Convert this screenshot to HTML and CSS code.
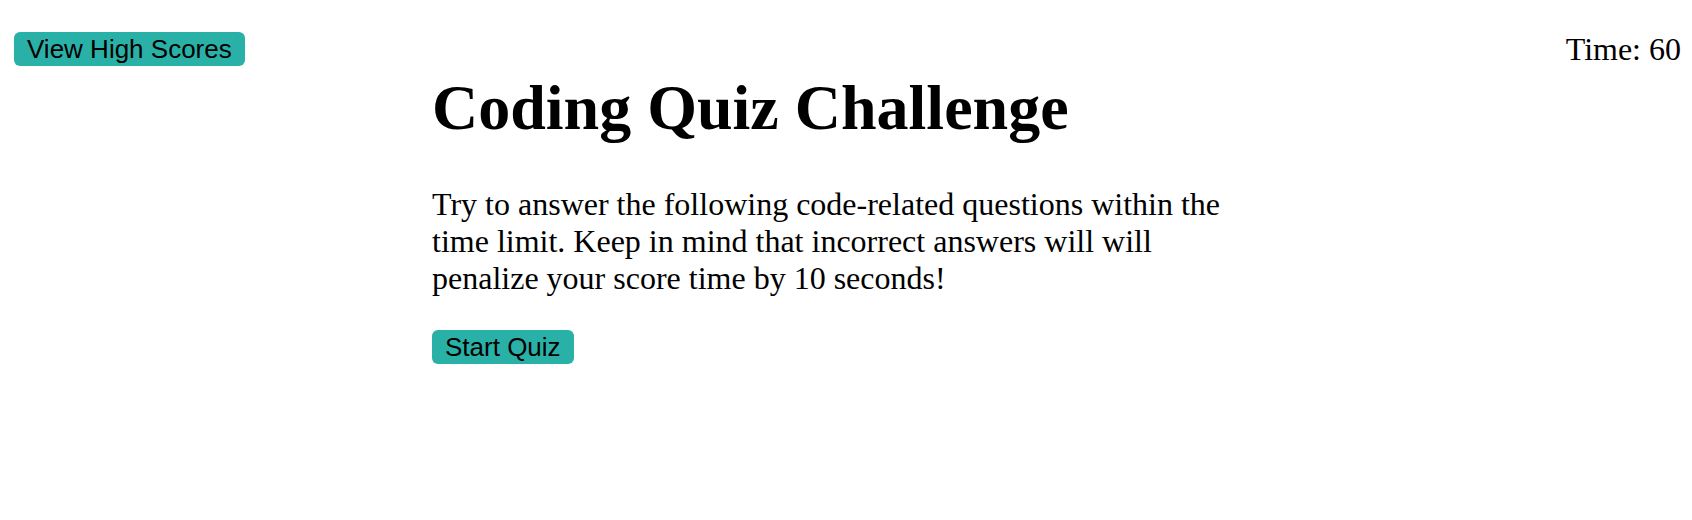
FILE: index.html
```html
<!DOCTYPE html>
<html lang="en">
<head>
<meta charset="utf-8">
<title>Coding Quiz Challenge</title>
<link rel="stylesheet" href="styles.css">
</head>
<body>
  <header class="topbar">
    <button class="btn">View High Scores</button>
    <div class="timer">Time: 60</div>
  </header>
  <main class="intro">
    <h1 class="title">Coding Quiz Challenge</h1>
    <p class="lead">Try to answer the following code-related questions within the time limit. Keep in mind that incorrect answers will will penalize your score time by 10 seconds!</p>
    <button class="btn">Start Quiz</button>
  </main>
</body>
</html>
```

FILE: styles.css
```css
html, body {
  margin: 0;
  padding: 0;
  background: #ffffff;
  color: #000000;
  font-family: "Liberation Serif", "Times New Roman", serif;
}

.topbar {
  display: flex;
  justify-content: space-between;
  align-items: center;
  padding: 32px 11px 0 14px;
}

.btn {
  font-family: "Liberation Sans", Arial, sans-serif;
  font-size: 26px;
  line-height: 34px;
  height: 34px;
  padding: 0 13px;
  margin: 0;
  border: none;
  border-radius: 6px;
  background: #2ab1a7;
  color: #000000;
  cursor: pointer;
}

.timer {
  font-size: 32px;
  line-height: 34px;
}

.intro {
  width: 828px;
  margin: 0 auto;
}

.title {
  font-size: 64px;
  font-weight: bold;
  margin: 5px 0 0;
}

.lead {
  font-size: 32px;
  line-height: 37px;
  margin: 41px 0 33px;
}
```
